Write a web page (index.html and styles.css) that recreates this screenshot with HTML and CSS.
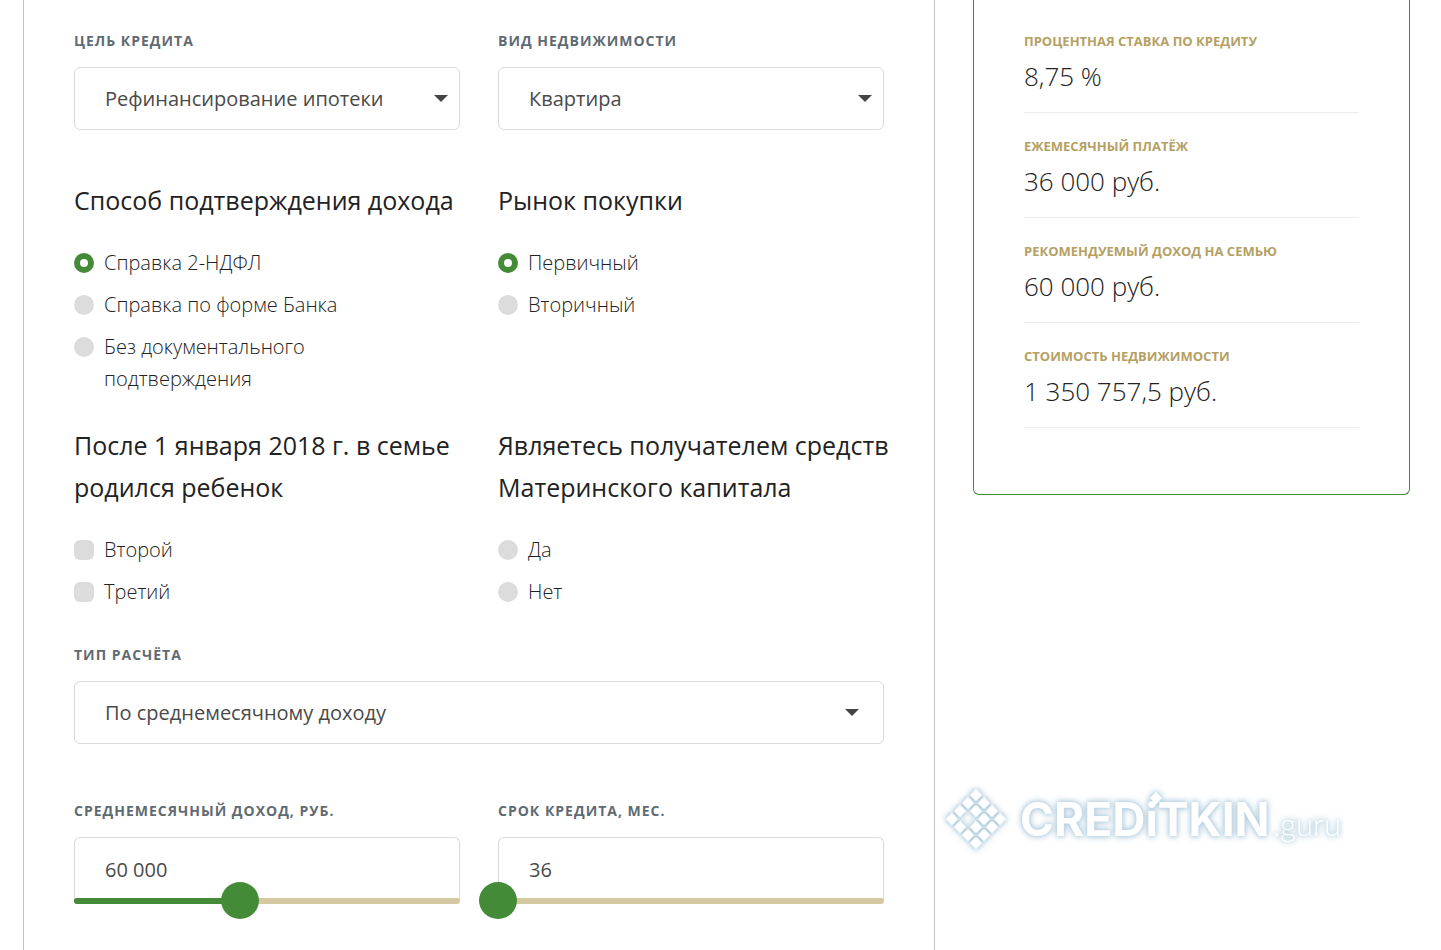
FILE: index.html
```html
<!DOCTYPE html>
<html lang="ru">
<head>
<meta charset="utf-8">
<title>Ипотечный калькулятор</title>
<meta name="viewport" content="width=device-width, initial-scale=1">
<link rel="stylesheet" href="styles.css">
</head>
<body>
<main class="page">
  <form class="form">
    <div class="field">
      <label class="label" for="goal">Цель кредита</label>
      <div class="select">
        <select class="control" id="goal"><option>Рефинансирование ипотеки</option></select>
      </div>
    </div>
    <div class="field">
      <label class="label" for="kind">Вид недвижимости</label>
      <div class="select">
        <select class="control" id="kind"><option>Квартира</option></select>
      </div>
    </div>

    <fieldset class="group group-first">
      <legend class="title">Способ подтверждения дохода</legend>
      <div class="options options-narrow">
        <label class="option"><input class="mark" type="radio" name="proof" checked><span>Справка 2-НДФЛ</span></label>
        <label class="option"><input class="mark" type="radio" name="proof"><span>Справка по форме Банка</span></label>
        <label class="option"><input class="mark" type="radio" name="proof"><span>Без документального подтверждения</span></label>
      </div>
    </fieldset>
    <fieldset class="group group-first">
      <legend class="title">Рынок покупки</legend>
      <div class="options">
        <label class="option"><input class="mark" type="radio" name="market" checked><span>Первичный</span></label>
        <label class="option"><input class="mark" type="radio" name="market"><span>Вторичный</span></label>
      </div>
    </fieldset>

    <fieldset class="group">
      <legend class="title">После 1 января 2018 г. в семье родился ребенок</legend>
      <div class="options">
        <label class="option"><input class="mark" type="checkbox"><span>Второй</span></label>
        <label class="option"><input class="mark" type="checkbox"><span>Третий</span></label>
      </div>
    </fieldset>
    <fieldset class="group">
      <legend class="title">Являетесь получателем средств Материнского капитала</legend>
      <div class="options">
        <label class="option"><input class="mark" type="radio" name="capital"><span>Да</span></label>
        <label class="option"><input class="mark" type="radio" name="capital"><span>Нет</span></label>
      </div>
    </fieldset>

    <div class="field field-wide">
      <label class="label" for="calc">Тип расчёта</label>
      <div class="select select-wide">
        <select class="control" id="calc"><option>По среднемесячному доходу</option></select>
      </div>
    </div>

    <div class="field field-range">
      <label class="label" for="income">Среднемесячный доход, руб.</label>
      <div class="range-box">
        <input class="control control-range" id="income" type="text" value="60 000">
        <div class="track"><div class="fill" style="width: 43%"></div></div>
        <input class="range" type="range" min="0" max="100" value="43" aria-label="Среднемесячный доход">
      </div>
    </div>
    <div class="field field-range">
      <label class="label" for="term">Срок кредита, мес.</label>
      <div class="range-box">
        <input class="control control-range" id="term" type="text" value="36">
        <div class="track"><div class="fill" style="width: 0%"></div></div>
        <input class="range" type="range" min="0" max="100" value="0" aria-label="Срок кредита">
      </div>
    </div>
  </form>

  <aside class="side">
    <dl class="summary">
      <div class="item"><dt class="name">Процентная ставка по кредиту</dt><dd class="value">8,75 %</dd></div>
      <div class="item"><dt class="name">Ежемесячный платёж</dt><dd class="value">36 000 руб.</dd></div>
      <div class="item"><dt class="name">Рекомендуемый доход на семью</dt><dd class="value">60 000 руб.</dd></div>
      <div class="item"><dt class="name">Стоимость недвижимости</dt><dd class="value">1 350 757,5 руб.</dd></div>
    </dl>
  </aside>
</main>

<svg class="logo" width="404" height="70" viewBox="940 785 404 70" role="img" aria-label="CREDiTKIN.guru">
  <defs><path id="d" d="M0-6.2 6.2 0 0 6.2-6.2 0Z"/></defs>
  <g class="logo-shape">
    <use href="#d" x="976" y="795"/>
    <use href="#d" x="968" y="803"/><use href="#d" x="984" y="803"/>
    <use href="#d" x="960" y="811"/><use href="#d" x="976" y="811"/><use href="#d" x="992" y="811"/>
    <use href="#d" x="952" y="819"/><use href="#d" x="984" y="819"/><use href="#d" x="1000" y="819"/>
    <use href="#d" x="960" y="827"/><use href="#d" x="976" y="827"/><use href="#d" x="992" y="827"/>
    <use href="#d" x="968" y="835"/><use href="#d" x="984" y="835"/>
    <use href="#d" x="976" y="843"/>
  </g>
  <g class="logo-shape">
    <text class="logo-name" x="1020" y="836">CREDiTKIN</text>
    <use href="#d" x="1156" y="798"/>
  </g>
  <text class="logo-shape logo-zone" x="1273" y="836">.guru</text>
</svg>
</body>
</html>
```
FILE: styles.css
```css
* {
  box-sizing: border-box;
}

body {
  margin: 0;
  background: #fff;
  color: #222;
  font-family: "Open Sans", "Noto Sans", sans-serif;
}

.page {
  display: grid;
  grid-template-columns: 912fr 437fr;
  gap: 38px;
  align-items: start;
  min-height: 100vh;
  padding: 0 31px 0 23px;
}

.form {
  display: grid;
  grid-template-columns: 1fr 1fr;
  align-content: start;
  column-gap: 38px;
  min-height: 100vh;
  padding: 31px 50px 25px;
  border: solid #c4c4c4;
  border-width: 0 1px;
}

.field {
  display: flex;
  flex-direction: column;
  gap: 16px;
  min-width: 0;
}

.field-wide {
  grid-column: 1 / -1;
  margin-top: 37px;
}

.field-range {
  margin-top: 57px;
}

.label {
  color: #5f6b73;
  font-size: 14px;
  font-weight: 700;
  letter-spacing: 1px;
  line-height: 20px;
  text-transform: uppercase;
}

.select {
  position: relative;
}

.select::after {
  content: "";
  position: absolute;
  top: 28px;
  right: 12px;
  border: solid transparent;
  border-width: 7px 7px 0;
  border-top-color: #444;
  pointer-events: none;
}

.select-wide::after {
  right: 25px;
}

.control {
  display: block;
  width: 100%;
  height: 63px;
  margin: 0;
  padding: 0 30px;
  appearance: none;
  border: 1px solid #d9d9d9;
  border-radius: 6px;
  background: #fff;
  color: #4a4a4a;
  font-family: inherit;
  font-size: 20px;
  font-weight: 400;
}

.control-range {
  border-bottom: 0;
  border-radius: 6px 6px 0 0;
}

.range-box {
  position: relative;
}

.track {
  position: absolute;
  top: 61px;
  left: 0;
  width: 100%;
  height: 6px;
  overflow: hidden;
  border-radius: 3px;
  background: #d5c9a4;
}

.fill {
  height: 100%;
  background: #438b37;
}

.range {
  position: absolute;
  top: 45px;
  left: -19px;
  width: calc(100% + 38px);
  height: 37px;
  margin: 0;
  appearance: none;
  background: transparent;
}

.range::-webkit-slider-thumb {
  width: 38px;
  height: 37px;
  appearance: none;
  border: 0;
  border-radius: 50%;
  background: #438b37;
}

.group {
  min-width: 0;
  margin: 29px 0 0;
  padding: 0;
  border: 0;
}

.group-first {
  margin-top: 49px;
}

.title {
  width: calc(100% + 20px);
  padding: 0;
  font-size: 25px;
  font-weight: 400;
  line-height: 42px;
}

.options {
  display: flex;
  flex-direction: column;
  gap: 10px;
  margin-top: 26px;
}

.options-narrow {
  max-width: 280px;
}

.option {
  display: flex;
  gap: 10px;
  font-size: 20px;
  font-weight: 300;
  line-height: 32px;
}

.mark {
  flex: none;
  width: 20px;
  height: 20px;
  margin: 6px 0 0;
  appearance: none;
  border-radius: 6px;
  background: #dcdcdc;
}

.mark[type="radio"] {
  border-radius: 50%;
}

.mark:checked {
  border: 6px solid #438b37;
  background: #fff;
}

.side {
  padding: 8px 50px 66px;
  border: 1px solid #438b37;
  border-top: 0;
  border-radius: 0 0 6px 6px;
}

.summary {
  margin: 0;
}

.item {
  padding: 23px 0 15px;
  border-bottom: 1px solid #ececec;
}

.name {
  color: #b5a063;
  font-size: 13px;
  font-weight: 700;
  line-height: 20px;
  text-transform: uppercase;
}

.value {
  margin: 4px 0 0;
  font-size: 26px;
  font-weight: 300;
  line-height: 42px;
}

.logo {
  position: absolute;
  top: 785px;
  left: 940px;
}

.logo-shape {
  fill: #fff;
  filter: drop-shadow(0 0 2px #b4cfdf) drop-shadow(0 0 3px #b4cfdf);
}

.logo-name {
  font-family: Inter, sans-serif;
  font-size: 46px;
  font-weight: 700;
}

.logo-zone {
  font-family: Lato, sans-serif;
  font-size: 31px;
  font-weight: 300;
}
```
